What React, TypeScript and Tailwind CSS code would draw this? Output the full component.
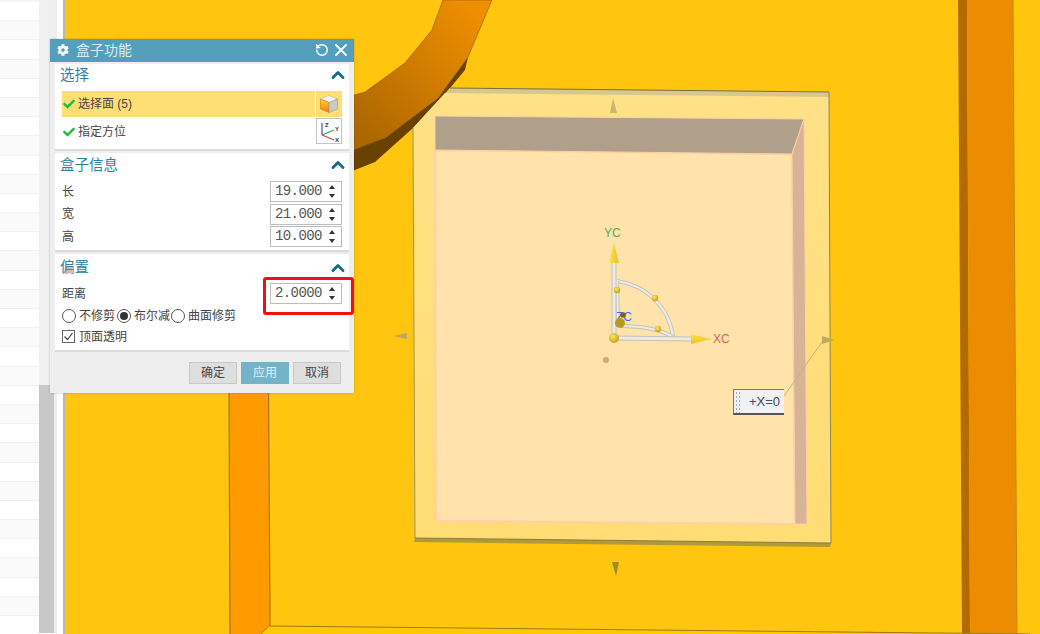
import React from 'react';
import { ChevronUp, RotateCw, X } from 'lucide-react';
import { FaCheck, FaCog } from 'react-icons/fa';

const rows = Array.from({ length: 33 }, (_, i) => i);

const Section = ({ title, headerClass, className, children }: { title: string; headerClass: string; className: string; children: React.ReactNode }) => (
  <section className={`bg-white border-b-2 border-[#dcdcdc] ${className}`}>
    <div className={`flex items-center justify-between pl-[5px] pr-[1px] ${headerClass}`}>
      <span className="text-[14.5px] leading-none text-[#2e809f]">{title}</span>
      <ChevronUp size={20} strokeWidth={3.4} className="text-[#17688a]" />
    </div>
    {children}
  </section>
);

const Stepper = () => (
  <svg width="8" height="15" viewBox="0 0 8 15" className="ml-auto mr-[5px]">
    <path d="M4 1 L7 5 H1 Z" fill="#333" />
    <path d="M4 14 L7 10 H1 Z" fill="#333" />
  </svg>
);

const NumberField = ({ value }: { value: string }) => (
  <div className="flex items-center w-[72px] h-[21px] border border-[#bdbdbd] bg-white pl-[4px] font-['Liberation_Mono',monospace] text-[14px] tracking-[-0.6px] text-[#555]">
    {value}
    <Stepper />
  </div>
);

const FieldRow = ({ label, value }: { label: string; value: string }) => (
  <div className="flex items-center justify-between text-[12px] text-[#444]">
    <span>{label}</span>
    <NumberField value={value} />
  </div>
);

const Radio = ({ label, checked, className }: { label: string; checked?: boolean; className: string }) => (
  <label className={`flex items-center gap-[3px] text-[12px] leading-none text-[#444] ${className}`}>
    <span className="flex items-center justify-center w-[14px] h-[14px] shrink-0 rounded-full border border-[#555] bg-white">
      {checked && <span className="w-[8px] h-[8px] rounded-full bg-[#333]" />}
    </span>
    {label}
  </label>
);

const CubeIcon = () => (
  <svg width="20" height="20" viewBox="0 0 20 20">
    <defs>
      <linearGradient id="cubeFace" x1="0" y1="0" x2="0" y2="1">
        <stop offset="0" stopColor="#ffd22e" />
        <stop offset="1" stopColor="#f07c10" />
      </linearGradient>
    </defs>
    <path d="M10 1.5 L18.5 5 L10 8.5 L1.5 5 Z" fill="#f7f7f7" stroke="#b5b5b5" strokeWidth="0.6" />
    <path d="M1.5 5 L10 8.5 V18.5 L1.5 15 Z" fill="url(#cubeFace)" stroke="#d27a10" strokeWidth="0.6" />
    <path d="M18.5 5 L10 8.5 V18.5 L18.5 15 Z" fill="#c9c9c9" stroke="#9a9a9a" strokeWidth="0.6" />
  </svg>
);

const AxesIcon = () => (
  <svg width="24" height="24" viewBox="0 0 24 24">
    <path d="M5 16 V4" stroke="#2f55c8" strokeWidth="1.2" />
    <path d="M5 16 L17 11" stroke="#2eae3c" strokeWidth="1.2" />
    <path d="M5 16 L17 21" stroke="#d24040" strokeWidth="1.2" />
    <text x="8" y="8" fontSize="6" fontWeight="700" fill="#333" fontFamily="Liberation Sans">Z</text>
    <text x="18" y="12" fontSize="6" fontWeight="700" fill="#333" fontFamily="Liberation Sans">Y</text>
    <text x="18" y="23" fontSize="6" fontWeight="700" fill="#333" fontFamily="Liberation Sans">X</text>
  </svg>
);

const Rod = ({ d, wide }: { d: string; wide?: boolean }) => (
  <>
    <path d={d} stroke="#c4c1b4" strokeWidth={wide ? 5 : 4} fill="none" />
    <path d={d} stroke="#ecebe4" strokeWidth={wide ? 3 : 2.2} fill="none" />
  </>
);

const Ball = ({ cx, cy, r }: { cx: number; cy: number; r: number }) => (
  <circle cx={cx} cy={cy} r={r} fill="url(#ball)" />
);

const Scene = () => (
  <svg viewBox="65 0 975 634" className="block w-full h-full">
    <defs>
      <linearGradient id="bandFace" gradientUnits="userSpaceOnUse" x1="470" y1="10" x2="350" y2="130">
        <stop offset="0" stopColor="#ee8e00" />
        <stop offset="1" stopColor="#aa6600" />
      </linearGradient>
      <linearGradient id="rim" x1="0" y1="0" x2="0" y2="1">
        <stop offset="0" stopColor="#ffe186" />
        <stop offset="1" stopColor="#ffdc74" />
      </linearGradient>
      <radialGradient id="ball" cx="0.4" cy="0.35" r="0.7">
        <stop offset="0" stopColor="#ffe65a" />
        <stop offset="1" stopColor="#c49a18" />
      </radialGradient>
      <linearGradient id="coneY" x1="0" y1="0" x2="1" y2="0">
        <stop offset="0" stopColor="#ffe44a" />
        <stop offset="1" stopColor="#e8c028" />
      </linearGradient>
      <linearGradient id="coneX" x1="0" y1="0" x2="0" y2="1">
        <stop offset="0" stopColor="#ffe44a" />
        <stop offset="1" stopColor="#e8c028" />
      </linearGradient>
    </defs>

    {/* right rib */}
    <polygon points="958,0 967,0 970,634 962,634" fill="#b36b00" />
    <polygon points="967,0 1013,0 1017,634 970,634" fill="#ed8c00" />
    <path d="M1013 0 L1017 634" stroke="#c98a10" strokeWidth="1" />

    {/* left rib and floor line */}
    <polygon points="229,380 268,380 270,626 261,634 230,634" fill="#ff9a00" />
    <path d="M229 380 L230 634" stroke="#a8701a" strokeWidth="1.2" />
    <path d="M268.5 380 L270 626 L261 634" stroke="#a8701a" strokeWidth="1.2" fill="none" />
    <polygon points="270,626 1040,634 261,634" fill="#ffc800" />
    <path d="M270 626 L1030 634" stroke="#9a7a18" strokeWidth="1" />

    {/* curved band */}
    <polygon points="468,57 465,70 450,88 413,128 375,162 340,176 340,150 385,138 438,98" fill="#6a4200" />
    <polygon points="443,0 432,30 405,63 365,92 340,99 340,155 385,138 438,98 468,57 492,0" fill="url(#bandFace)" stroke="#8a5a08" strokeWidth="0.6" />

    {/* pocket block */}
    <polygon points="450,88 829,92 829,98 445,94" fill="#d9c88e" />
    <path d="M450 88 L829 92" stroke="#77703f" strokeWidth="1" />
    <polygon points="445,93 829,97 831,543 415,538 413,128" fill="url(#rim)" />
    <path d="M829 92 L831 543" stroke="#8f8750" strokeWidth="1" />
    <path d="M413 128 L415 538" stroke="#9c9560" strokeWidth="1" />
    <polygon points="415,538 831,543 830,547 414,542" fill="#b39a38" />
    <path d="M415 538 L831 543" stroke="#77703f" strokeWidth="0.8" />

    {/* cavity */}
    <polygon points="435,150 792,154 795,524 436,521" fill="#ffe3ab" stroke="#ffcfa6" strokeWidth="2" />
    <polygon points="435,116 804,119 792,154 435,150" fill="#b09f8b" stroke="#ffcfa6" strokeWidth="1" />
    <polygon points="804,119 807,524 795,524 792,154" fill="#d6b495" stroke="#ffcfa6" strokeWidth="1" />

    {/* drag handles */}
    <polygon points="613,98 610,113 617,113" fill="#c8b768" />
    <polygon points="612,562 619,562 616,576" fill="#9c8a30" />
    <polygon points="393,336 407,333 407,339" fill="#bca860" />
    <polygon points="835,340 822,336 822,344" fill="#bfa95a" />
    <path d="M784 396 L822 342" stroke="#c9b27a" strokeWidth="1" />

    {/* csys */}
    <Rod d="M617 281 C 645 285 668 305 673 336" />
    <Rod d="M620 326 C 640 326 660 329 673 337" />
    <Rod d="M617 281 L618 326" />
    <Rod d="M614 338 V262" wide />
    <Rod d="M614 338 L692 339" wide />
    <text x="616" y="321" fontSize="12" fill="#3b6cff" fontFamily="Liberation Sans">ZC</text>
    <polygon points="614,243 609,263 619,263" fill="url(#coneY)" />
    <polygon points="712,339 691,334 691,344" fill="url(#coneX)" />
    <Ball cx={617} cy={290} r={3.2} />
    <Ball cx={655} cy={298} r={3.2} />
    <Ball cx={658} cy={329} r={3.2} />
    <circle cx="623" cy="315" r="2.8" fill="#7a6420" />
    <circle cx="620" cy="323" r="5" fill="#b89a20" />
    <Ball cx={614} cy={338} r={5} />
    <circle cx="606" cy="360" r="3" fill="#c9b060" />
    <text x="604" y="237" fontSize="12" fill="#5aa862" fontFamily="Liberation Sans">YC</text>
    <text x="713" y="343" fontSize="12" fill="#e0605a" fontFamily="Liberation Sans">XC</text>
  </svg>
);

export default function App() {
  return (
    <div className="relative flex w-[1040px] h-[634px] overflow-hidden bg-white font-['Liberation_Sans','Noto_Sans_CJK_SC',sans-serif]">
      {/* sheet rows on the left */}
      <div className="w-[39px] shrink-0 overflow-hidden">
        <div className="h-[2px] bg-[#f4f4f4]" />
        {rows.map((i) => (
          <div key={i} className={`h-[19.2px] border-b border-[#f1f1f1] ${i % 2 === 0 ? 'bg-white' : 'bg-[#fafafa]'}`} />
        ))}
      </div>

      {/* scrollbar */}
      <div className="flex flex-col w-[15px] shrink-0">
        <div className="h-[385px] bg-[#f0f0f0]" />
        <div className="h-[248px] bg-[#c8c8c8]" />
      </div>
      <div className="w-[3px] shrink-0 bg-[#efefef]" />
      <div className="w-[6px] shrink-0 bg-white" />
      <div className="w-[2px] shrink-0 bg-[#b9b9b9]" />

      {/* viewport */}
      <div className="relative flex-1 bg-[#ffc50f]">
        <Scene />
        <div className="absolute left-[668px] top-[389px] flex w-[51px] h-[26px] items-center border-t border-l border-[#777] border-b-2 border-b-[#555] bg-[#f0f1f5]">
          <div className="ml-[1px] w-[6px] h-[22px] bg-[radial-gradient(#aaa_1px,transparent_1px)] bg-[length:3px_4px]" />
          <span className="ml-[8px] text-[13px] leading-none text-[#4a4a55]">+X=0</span>
        </div>
      </div>

      {/* dialog */}
      <div className="absolute left-[50px] top-[39px] flex flex-col w-[304px] h-[354px] bg-[#eeeeee] shadow-[0_0_2px_rgba(0,0,0,0.25)]">
        <div className="flex items-center h-[23px] shrink-0 pb-[2px] pl-[7px] pr-[3px] bg-[#549fbb] text-[#dcecf2]">
          <FaCog size={12} className="text-white" />
          <span className="ml-[7px] text-[14px] leading-none">盒子功能</span>
          <RotateCw size={14} strokeWidth={2.4} className="ml-auto text-white -scale-x-100" />
          <X size={20} strokeWidth={2.2} className="ml-[2px] text-white" />
        </div>

        <div className="flex flex-col gap-[2px] px-[5px] pt-[2px]">
          <Section title="选择" headerClass="h-[22px]" className="h-[87px]">
            <div className="flex flex-col gap-[1px] pt-[5px] px-[7px]">
              <div className="flex gap-[1px]">
                <div className="flex flex-1 items-center h-[26px] pl-[1px] bg-[#ffdf73] text-[12px] text-[#444]">
                  <FaCheck size={12} className="text-[#22bb44]" />
                  <span className="ml-[3px]">选择面 (5)</span>
                </div>
                <div className="flex items-center justify-center w-[26px] h-[26px] bg-[#ffdf73]">
                  <CubeIcon />
                </div>
              </div>
              <div className="flex gap-[1px]">
                <div className="flex flex-1 items-center h-[26px] pl-[1px] pt-[2px] text-[12px] text-[#444]">
                  <FaCheck size={12} className="text-[#22bb44]" />
                  <span className="ml-[3px]">指定方位</span>
                </div>
                <div className="flex items-center justify-center w-[26px] h-[26px] border border-[#c4c4c4] bg-white">
                  <AxesIcon />
                </div>
              </div>
            </div>
          </Section>

          <Section title="盒子信息" headerClass="h-[24px]" className="h-[99px]">
            <div className="flex flex-col gap-[1.5px] pt-[4px] px-[7px]">
              <FieldRow label="长" value="19.000" />
              <FieldRow label="宽" value="21.000" />
              <FieldRow label="高" value="10.000" />
            </div>
          </Section>

          <Section title="偏置" headerClass="h-[27px]" className="h-[98px]">
            <div className="flex flex-col pt-[2px] px-[7px]">
              <FieldRow label="距离" value="2.0000" />
              <div className="flex mt-[5px] h-[14px]">
                <Radio label="不修剪" className="w-[55px]" />
                <Radio label="布尔减" checked className="w-[54px]" />
                <Radio label="曲面修剪" className="w-[70px]" />
              </div>
              <label className="flex items-center gap-[4px] mt-[7px] text-[12px] leading-none text-[#444]">
                <span className="flex items-center justify-center w-[13px] h-[13px] border border-[#666] bg-white">
                  <svg width="11" height="11" viewBox="0 0 11 11">
                    <path d="M1.5 5.5 L4.5 8.5 L9.5 2" stroke="#444" strokeWidth="1.2" fill="none" />
                  </svg>
                </span>
                顶面透明
              </label>
            </div>
          </Section>
        </div>

        <div className="flex justify-end gap-[4px] pt-[10px] pr-[13px]">
          <button className="w-[48px] h-[22px] border border-[#c8c8c8] bg-[#dedede] text-[12px] text-[#444]">确定</button>
          <button className="w-[48px] h-[22px] bg-[#74b4cb] text-[12px] text-[#dff0f5]">应用</button>
          <button className="w-[48px] h-[22px] border border-[#c8c8c8] bg-[#dedede] text-[12px] text-[#444]">取消</button>
        </div>
      </div>

      {/* red marker */}
      <div className="absolute left-[263px] top-[277px] w-[91px] h-[38px] border-[3px] border-[#f01010] rounded-[3px]" />
    </div>
  );
}
